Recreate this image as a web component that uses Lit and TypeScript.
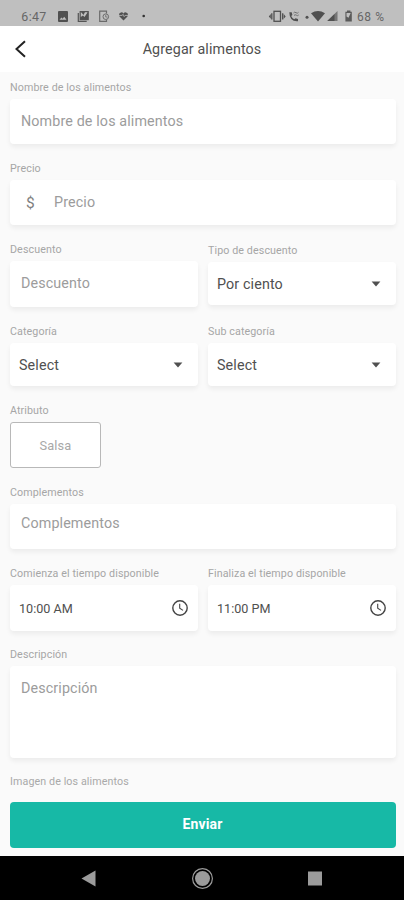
import { LitElement, html, css, svg } from "lit";
import { customElement, property } from "lit/decorators.js";

const caret = html`<svg class="caret" width="10" height="6" viewBox="0 0 10 6"><path d="M0.6 0.4h8.8L5 5.4z" fill="#505050"/></svg>`;
const clock = html`<svg class="clock" width="18" height="18" viewBox="0 0 18 18" fill="none" stroke="#444"><circle cx="9" cy="9" r="7.2" stroke-width="1.4"/><path d="M8.7 4.8v4.4l3.3 2.2" stroke-width="1.1"/></svg>`;

@customElement("status-bar")
class StatusBar extends LitElement {
  static styles = css`
    :host { display: block; height: 26px; background: #bfbfbf; }
    svg { display: block; }
    text { font-family: Roboto, sans-serif; fill: #666; }
  `;
  render() {
    return html`<svg width="404" height="26" viewBox="0 0 404 26" fill="#505050">
      <text x="21.3" y="20.8" font-size="12.4" textLength="25">6:47</text>
      ${svg`
      <path fill-rule="evenodd" d="M59 11h8q1 0 1 1v9q0 1-1 1h-8q-1 0-1-1v-9q0-1 1-1zM59.5 19.8h7l-2.3-3-1.6 2-1.2-1.4z"/>
      <g fill="none" stroke="#555" stroke-width="1.2"><path d="M78.3 13v8.4h8.4"/><rect x="80.2" y="11.6" width="8" height="8"/></g>
      <path d="M80 17.5l3-2 1.5 1.5 3.7-5.4v8H80zM81 12h4l-1.5 3z"/>
      <path d="M106.5 13.6v-2.4h-6.8v10.2h6.8v-1.6" fill="none" stroke="#6b6b6b" stroke-width="1.2"/>
      <circle cx="105.8" cy="16.7" r="2.8" fill="none" stroke="#6b6b6b"/><path d="M105.7 15v2h1.8" fill="none" stroke="#6b6b6b" stroke-width=".8"/>
      <path d="M123.500 20.600l-4-4.200q-1.400-3.400 1.600-4 1.500-.2 2.400 1.100.9-1.300 2.400-1.100 3 .6 1.600 4z"/>
      <path d="M119 15.400h3l1.200-1 1 2.200 1-1.200h3" fill="none" stroke="#bfbfbf" stroke-width=".8"/>
      <circle cx="143.700" cy="16" r="1.300" fill="#333"/>
      <g fill="none" stroke="#505050" stroke-width="1.300"><rect x="274" y="11.300" width="6.500" height="10"/><path d="M271.800 13.300v6.200M282.700 13.300v6.200"/></g><path d="M270.800 14l-2 2.400 2 2.400zM283.700 14l2 2.400-2 2.400z"/>
      <path d="M289.300 12.300h2.400l.7 2.600-1.200 1.100q1 2.200 3 3.300l1.300-1.100 2.500.7v2.300q-8.500.7-8.700-8.900z"/>
      <path d="M293.500 13q1-1.500 2.500-.3t2.500-.4M294 15.400q1.200-1.200 2.300-.2t2.400-.2" fill="none" stroke="#707070"/>
      <circle cx="307" cy="17.200" r="1.500"/>
      <path d="M311 13.200q7-4.200 14 0L318 21.400z"/>
      <path d="M337.500 11v10H327.300z" fill="#777"/><path d="M334.500 14v7H327.300z" fill="#505050"/>
      <path fill-rule="evenodd" d="M347 10.500h3.400v1.300h1.400v9.800h-6.400v-9.800h1.600zM346.500 13v3.500l2 1.300 2.200-4.800z" fill="#5a5a5a"/>`}
      <text x="357" y="20.700" font-size="12" textLength="27">68 %</text>
    </svg>`;
  }
}

@customElement("form-field")
class FormField extends LitElement {
  @property() label = "";
  @property() value = "";
  @property() kind = "input";
  static styles = css`
    :host { display: block; }
    .label { height: 12px; line-height: 12px; padding-top: 1px; margin-bottom: -1px; font-size: 10.7px; letter-spacing: 0.1px; color: #a6a6a6; white-space: nowrap; }
    .box {
      box-sizing: border-box; margin-top: 6px; height: 45px; padding: 0 11px; border-radius: 4px;
      background: #fff; box-shadow: 0 3px 5px rgba(0, 0, 0, 0.06);
      display: flex; align-items: center; color: #9c9c9c; font-size: 14.3px; letter-spacing: 0.13px; white-space: nowrap;
    }
    .text { position: relative; top: -1px; }
    .tall { height: 46px; }
    .raised { padding-bottom: 5px; }
    .select { height: 43px; padding-left: 9px; color: #505050; }
    .select .text { top: 0; }
    .time { height: 46px; padding-left: 9px; padding-right: 9px; color: #505050; font-size: 12.6px; letter-spacing: 0; }
    .time .text { top: 0; }
    .caret { margin-left: auto; margin-right: 4px; }
    .clock { margin-left: auto; }
    .area { height: 92px; align-items: flex-start; padding-top: 15px; }
    .dollar { width: 33px; padding-left: 5px; box-sizing: border-box; color: #808080; font-size: 15.5px; }
    .chip { width: 91px; height: 46px; justify-content: center; border: 1px solid #b8b8b8; border-radius: 3px; box-shadow: none; font-size: 12.8px; color: #a8a8a8; }
    .chip .text { top: 0; }
  `;
  render() {
    return html`<div class="label">${this.label}</div>
      <div class="box ${this.kind}">
        ${this.kind === "money" ? html`<span class="dollar">$</span>` : ""}
        <span class="text">${this.value}</span>
        ${this.kind === "select" ? caret : this.kind === "time" ? clock : ""}
      </div>`;
  }
}

@customElement("app-root")
class AppRoot extends LitElement {
  static styles = css`
    :host { display: flex; flex-direction: column; height: 900px; background: #fafafa; font-family: Roboto, sans-serif; overflow: hidden; }
    .header { height: 46px; background: #fff; display: grid; grid-template-columns: 40px 1fr 40px; align-items: center; }
    .back { display: block; margin-left: 14px; }
    .title { text-align: center; font-size: 14.3px; letter-spacing: 0.12px; color: #505050; }
    .form { flex: 1; padding: 9px 8px 0 10px; }
    .row { display: grid; grid-template-columns: 188px 188px; column-gap: 10px; }
    .g18 { margin-top: 18px; }
    .g17 { margin-top: 17px; }
    .g1 { margin-top: 1px; }
    .last { margin-top: 18px; height: 12px; line-height: 12px; font-size: 10.7px; letter-spacing: 0.1px; color: #a9a9a9; }
    .submit { display: block; width: 386px; height: 46px; margin-top: 14px; padding: 0 1px 2px 0; border: 0; border-radius: 4px; background: #17b9a6; color: #fff; font: 700 14px Roboto, sans-serif; letter-spacing: 0.15px; }
    .nav { height: 44px; background: #000; }
    .nav svg { display: block; }
  `;
  render() {
    return html`
      <status-bar></status-bar>
      <div class="header">
        <svg class="back" width="14" height="18" viewBox="0 0 14 18"><path d="M11 1.300L2.500 9l8.500 7.700" fill="none" stroke="#222" stroke-width="2"/></svg>
        <div class="title">Agregar alimentos</div>
      </div>
      <div class="form">
        <form-field label="Nombre de los alimentos" value="Nombre de los alimentos"></form-field>
        <form-field class="g18" label="Precio" value="Precio" kind="money"></form-field>
        <div class="row g18">
          <form-field label="Descuento" value="Descuento" kind="tall"></form-field>
          <form-field class="g1" label="Tipo de descuento" value="Por ciento" kind="select"></form-field>
        </div>
        <div class="row g18">
          <form-field label="Categoría" value="Select" kind="select"></form-field>
          <form-field label="Sub categoría" value="Select" kind="select"></form-field>
        </div>
        <form-field class="g18" label="Atributo" value="Salsa" kind="chip"></form-field>
        <form-field class="g18" label="Complementos" value="Complementos" kind="raised"></form-field>
        <div class="row g18">
          <form-field label="Comienza el tiempo disponible" value="10:00 AM" kind="time"></form-field>
          <form-field label="Finaliza el tiempo disponible" value="11:00 PM" kind="time"></form-field>
        </div>
        <form-field class="g17" label="Descripción" value="Descripción" kind="area"></form-field>
        <div class="last">Imagen de los alimentos</div>
        <button class="submit">Enviar</button>
      </div>
      <div class="nav">
        <svg width="404" height="44" viewBox="0 0 404 44" fill="#9b9b9b">
          <path d="M81.500 22.500L95.500 14.500v16z"/>
          <circle cx="202.500" cy="22.500" r="7.500"/><circle cx="202.500" cy="22.500" r="9.900" fill="none" stroke="#9b9b9b" stroke-width="1.200"/>
          <rect x="308" y="15.500" width="14" height="14"/>
        </svg>
      </div>`;
  }
}
